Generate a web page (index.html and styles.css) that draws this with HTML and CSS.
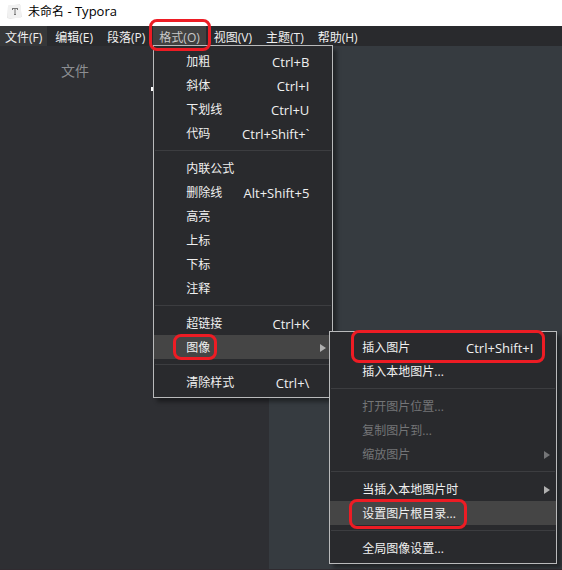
FILE: index.html
```html
<!DOCTYPE html>
<html lang="zh-CN">
<head>
<meta charset="utf-8">
<title>未命名 - Typora</title>
<link rel="stylesheet" href="styles.css">
</head>
<body>
<header class="titlebar">
  <svg class="app-icon" viewBox="0 0 15 15" aria-hidden="true">
    <path d="M1 2 L13 0 L15 13 L3 15 L0 14 Z" fill="#e8e8e8"/>
    <rect x="1" y="1" width="13" height="13" rx="1" fill="#f1f1f1"/>
    <path d="M5 4 H11 V6 H10 V5 H8.5 V10 H9 V11 H7 V10 H7.5 V5 H6 V6 H5 Z" fill="#777"/>
  </svg>
  <h1 class="title">未命名<span class="latin"> - Typora</span></h1>
</header>
<nav class="menubar">
  <div class="entry"><button class="tab tab-hover">文件(F)</button></div>
  <div class="entry"><button class="tab">编辑(E)</button></div>
  <div class="entry"><button class="tab">段落(P)</button></div>
  <div class="entry">
    <button class="tab tab-open">格式(O)</button>
    <div class="menu menu-format">
      <button class="item"><span>加粗</span><kbd>Ctrl+B</kbd></button>
      <button class="item"><span>斜体</span><kbd>Ctrl+I</kbd></button>
      <button class="item"><span>下划线</span><kbd>Ctrl+U</kbd></button>
      <button class="item"><span>代码</span><kbd>Ctrl+Shift+`</kbd></button>
      <hr>
      <button class="item"><span>内联公式</span></button>
      <button class="item"><span>删除线</span><kbd>Alt+Shift+5</kbd></button>
      <button class="item"><span>高亮</span></button>
      <button class="item"><span>上标</span></button>
      <button class="item"><span>下标</span></button>
      <button class="item"><span>注释</span></button>
      <hr>
      <button class="item"><span>超链接</span><kbd>Ctrl+K</kbd></button>
      <div class="parent">
        <button class="item item-active has-sub"><span>图像</span></button>
        <i class="mark mark-image"></i>
        <div class="menu menu-image">
          <div class="parent">
            <button class="item"><span>插入图片</span><kbd>Ctrl+Shift+I</kbd></button>
            <i class="mark mark-insert"></i>
          </div>
          <button class="item"><span>插入本地图片...</span></button>
          <hr>
          <button class="item" disabled><span>打开图片位置...</span></button>
          <button class="item" disabled><span>复制图片到...</span></button>
          <button class="item has-sub" disabled><span>缩放图片</span></button>
          <hr>
          <button class="item has-sub"><span>当插入本地图片时</span></button>
          <div class="parent">
            <button class="item item-active"><span>设置图片根目录...</span></button>
            <i class="mark mark-root"></i>
          </div>
          <hr>
          <button class="item"><span>全局图像设置...</span></button>
        </div>
      </div>
      <hr>
      <button class="item"><span>清除样式</span><kbd>Ctrl+\</kbd></button>
    </div>
    <i class="mark mark-format"></i>
  </div>
  <div class="entry"><button class="tab">视图(V)</button></div>
  <div class="entry"><button class="tab">主题(T)</button></div>
  <div class="entry"><button class="tab">帮助(H)</button></div>
</nav>
<main class="workspace">
  <aside class="sidebar"><h2 class="side-title">文件</h2><i class="caret"></i></aside>
  <section class="editor"></section>
</main>
</body>
</html>
```

FILE: styles.css
```css
* {
  box-sizing: border-box;
}

body {
  margin: 0;
  min-height: 100vh;
  display: flex;
  flex-direction: column;
  overflow: hidden;
  background: #363b40;
  font: 12px/20px "Open Sans", "Noto Sans CJK SC", sans-serif;
  color: #f0f0f0;
}

button,
kbd {
  font: inherit;
  color: inherit;
}

kbd,
.latin {
  font-size: 13px;
}

button {
  margin: 0;
  border: 0;
  background: none;
  text-align: left;
  white-space: nowrap;
}

.titlebar {
  display: flex;
  align-items: center;
  gap: 6px;
  height: 26px;
  padding: 0 7px 4px;
  background: #fff;
  color: #000;
}

.app-icon {
  width: 15px;
  height: 15px;
}

.title {
  margin: 0;
  font-size: 12px;
  font-weight: 400;
}

.menubar {
  display: flex;
  gap: 2px;
  height: 20px;
  background: #292a2d;
}

.entry {
  position: relative;
}

.tab {
  display: block;
  height: 20px;
  padding: 2px 6px 0;
}

.entry:first-child .tab {
  padding-left: 5px;
  padding-right: 5px;
}

.tab-hover {
  background: #363739;
}

.tab-open {
  background: #414141;
  color: #c8c8c8;
}

.menu {
  position: absolute;
  z-index: 1;
  padding: 3px 0;
  border: 1px solid #b9babb;
  background: #292a2d;
  box-shadow: 4px 4px 4px rgba(0, 0, 0, 0.4);
}

.menu-format {
  top: 19px;
  left: 0;
  width: 180px;
}

.menu-image {
  top: -4px;
  left: 175px;
  width: 228px;
}

.parent {
  position: relative;
}

.item {
  display: flex;
  align-items: center;
  justify-content: space-between;
  width: 100%;
  height: 24px;
  padding: 2px 23px 0 32px;
}

.item:disabled {
  color: #747577;
}

.item-active {
  background: #454545;
}

.has-sub {
  padding-right: 6px;
}

.has-sub::after {
  content: "";
  border: solid transparent;
  border-width: 4px 0 4px 6px;
  border-left-color: #b0b0b0;
}

.has-sub:disabled::after {
  border-left-color: #747577;
}

hr {
  height: 1px;
  margin: 5px 1px;
  border: 0;
  background: #3c3d40;
}

.mark {
  position: absolute;
  z-index: 2;
  border: 3px solid #ed1c24;
  border-radius: 8px;
  pointer-events: none;
}

.mark-format {
  inset: -7px -5px -5px -4px;
}

.mark-image {
  top: -1px;
  left: 19px;
  width: 44px;
  height: 26px;
}

.mark-insert {
  inset: -5px 11px -4px 21px;
}

.mark-root {
  top: -2px;
  left: 19px;
  width: 118px;
  height: 30px;
}

.workspace {
  flex: 1;
  display: flex;
  border-bottom: 1px solid #302b30;
}

.sidebar {
  position: relative;
  width: 269px;
  background: #2e2f33;
}

.side-title {
  margin: 0;
  padding: 15px 61px;
  font-size: 14px;
  font-weight: 400;
  color: #8c8e92;
}

.caret {
  position: absolute;
  top: 41px;
  left: 151px;
  width: 3px;
  height: 4px;
  background: #fff;
}

.editor {
  flex: 1;
  background: #363b40;
}
```
